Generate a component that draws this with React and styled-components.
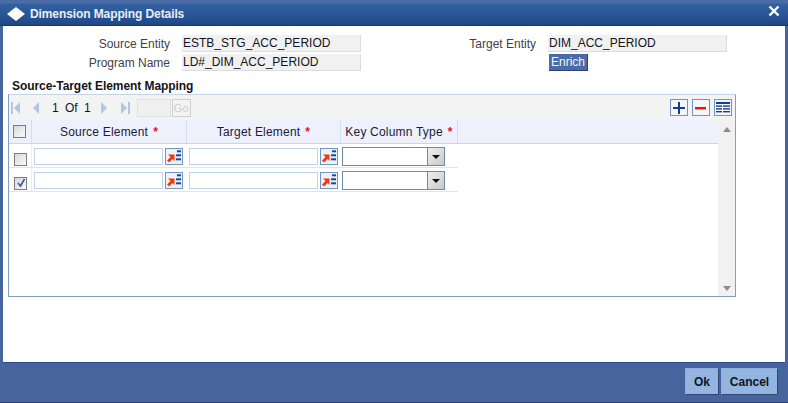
import React from 'react'
import styled, { createGlobalStyle } from 'styled-components'

const GlobalStyle = createGlobalStyle`
  html, body {
    margin: 0;
    padding: 0;
    background: #fff;
  }
  body {
    font-family: "Liberation Sans", Arial, sans-serif;
  }
`

const Dialog = styled.div`
  width: 788px;
  height: 403px;
  box-sizing: border-box;
  display: flex;
  flex-direction: column;
  overflow: hidden;
  background: #46659f;
  padding: 0 3px 3px;
  border-bottom: 1px solid #2a4478;
`

const TitleBar = styled.div`
  height: 26px;
  flex: none;
  display: flex;
  align-items: center;
  margin: 0 -3px;
  padding: 2px 8px 0 7px;
  box-sizing: border-box;
  background: linear-gradient(#4a6ba6 0, #4a6ba6 3px, #33619f 4px, #2a5595 60%, #1f4785 100%);
  border-bottom: 1px solid #16366c;
`

const TitleText = styled.span`
  margin-left: 5px;
  font-size: 12px;
  font-weight: bold;
  letter-spacing: -0.1px;
  color: #e8eef8;
  flex: 1;
`

const CloseIcon = styled.svg`
  margin-bottom: 5px;
`

const Body = styled.div`
  flex: 1;
  background: #fff;
  padding: 9px 0 0 5px;
  display: flex;
  flex-direction: column;
`

const Form = styled.div`
  display: flex;
  height: 42px;
`

const FormColumn = styled.div`
  width: ${props => props.width}px;
  flex: none;
  display: flex;
  flex-direction: column;
  gap: 2px;
`

const FormRow = styled.div`
  display: flex;
  align-items: center;
  height: 17px;
`

const Label = styled.label`
  width: ${props => props.width}px;
  flex: none;
  padding-right: 12px;
  box-sizing: border-box;
  text-align: right;
  font-size: 12px;
  color: #3f3f48;
`

const ReadOnlyValue = styled.div`
  width: 179px;
  height: 17px;
  box-sizing: border-box;
  background: #f1f1f1;
  border-right: 1px solid #dcdcdc;
  border-bottom: 1px solid #dcdcdc;
  padding-left: 1px;
  font-size: 12px;
  line-height: 16px;
  color: #14141c;
  white-space: nowrap;
`

const EnrichButton = styled.button`
  width: 39px;
  height: 17px;
  margin-left: 1px;
  padding: 0;
  border: 0;
  border-bottom: 1px solid #2d4370;
  border-right: 1px solid #2d4370;
  background: #4a6ba6;
  color: #f2f5fb;
  font-family: inherit;
  font-size: 12px;
  line-height: 15px;
`

const SectionTitle = styled.div`
  margin: 2px 0 0 4px;
  height: 15px;
  line-height: 15px;
  font-size: 12px;
  font-weight: bold;
  letter-spacing: -0.06px;
  color: #14141c;
`

const Panel = styled.div`
  width: 728px;
  height: 203px;
  box-sizing: border-box;
  border: 1px solid #7f9fc8;
  border-top-color: #c4d3e8;
  display: flex;
  flex-direction: column;
`

const Toolbar = styled.div`
  height: 25px;
  flex: none;
  display: flex;
  align-items: center;
  padding-left: 2px;
  background: #f3f3f3;
`

const Pager = styled.span`
  font-size: 12px;
  color: #14141c;
  word-spacing: 3px;
  margin: 0 10px 0 0;
`

const PageInput = styled.div`
  width: 32px;
  height: 16px;
  background: #f0f0f0;
  border: 1px solid #e0e0e0;
`

const GoButton = styled.div`
  width: 19px;
  height: 18px;
  margin-left: 1px;
  box-sizing: border-box;
  border: 1px solid #cfcfcf;
  font-size: 11px;
  line-height: 16px;
  text-align: center;
  color: #cfcfcf;
`

const ToolbarActions = styled.div`
  margin-left: auto;
  display: flex;
  gap: 4px;
  padding-right: 3px;
`

const ActionButton = styled.div`
  width: 18px;
  height: 17px;
  box-sizing: border-box;
  border: 1px solid #6f96bf;
  background: #f4f6fa;
  display: flex;
  align-items: center;
  justify-content: center;
`

const TableArea = styled.div`
  flex: 1;
  display: flex;
  min-height: 0;
`

const Table = styled.div`
  flex: 1;
  min-width: 0;
`

const HeaderRow = styled.div`
  height: 24px;
  display: flex;
  background: #eef1fb;
  border-bottom: 1px solid #c9d6ea;
  box-sizing: border-box;
`

const Row = styled.div`
  display: flex;
  width: 449px;
  height: 24px;
  box-sizing: border-box;
  border-bottom: 1px solid #dde5f3;
`

const HeaderCell = styled.div`
  width: ${props => props.width}px;
  flex: none;
  box-sizing: border-box;
  border-right: 1px solid #d3ddee;
  display: flex;
  align-items: center;
  justify-content: center;
  font-size: 12px;
  letter-spacing: 0.2px;
  color: #1a1a3a;
`

const HeaderCheckCell = styled(HeaderCell)`
  padding-right: 1px;
`

const Required = styled.span`
  color: #e4101c;
  font-weight: bold;
  margin-left: 5px;
`

const Cell = styled.div`
  width: ${props => props.width}px;
  flex: none;
  box-sizing: border-box;
  display: flex;
  align-items: center;
  padding: 2px 0 0 ${props => props.$pad || 0}px;
`

const CheckCell = styled(Cell)`
  justify-content: center;
  border-right: 1px solid #e8edf7;
  padding: 7px 0 0 1px;
`

const CheckBox = styled.div`
  width: 11px;
  height: 11px;
  border: 1px solid #7d7d7d;
  background: linear-gradient(135deg, #d8d8d8, #fafafa);
  display: flex;
  align-items: center;
  justify-content: center;
`

const TextInput = styled.div`
  width: 129px;
  height: 17px;
  box-sizing: border-box;
  border: 1px solid #c1d2e9;
  background: #fff;
`

const LovButton = styled.div`
  width: 18px;
  height: 17px;
  margin-left: 2px;
  box-sizing: border-box;
  border: 1px solid #6f96bf;
  background: #eef1f6;
  display: flex;
`

const Select = styled.div`
  width: 103px;
  height: 19px;
  box-sizing: border-box;
  margin-left: 1px;
  border: 1px solid #6d8bab;
  background: #fff;
  display: flex;
  justify-content: flex-end;
`

const SelectArrow = styled.div`
  width: 16px;
  background: linear-gradient(135deg, #f0f0f0, #c8c8c8);
  border-left: 1px solid #6d8bab;
  display: flex;
  align-items: center;
  justify-content: center;
  &::after {
    content: "";
    border-left: 4px solid transparent;
    border-right: 4px solid transparent;
    border-top: 4px solid #111;
  }
`

const Scrollbar = styled.div`
  width: 17px;
  flex: none;
  background: #f1f1f1;
  display: flex;
  flex-direction: column;
  justify-content: space-between;
  align-items: center;
  padding: 7px 0 5px;
  box-sizing: border-box;
`

const Footer = styled.div`
  height: 37px;
  flex: none;
  display: flex;
  align-items: center;
  justify-content: flex-end;
  gap: 2px;
  padding: 1px 7px 0 0;
  box-sizing: border-box;
  border-top: 1px solid #2f4c80;
`

const FooterButton = styled.button`
  width: ${props => props.width}px;
  height: 27px;
  padding: 0;
  border: 1px solid #8fb0dc;
  border-right-color: #2f4670;
  border-bottom-color: #2f4670;
  background: #94b5e0;
  color: #10141c;
  font-family: inherit;
  font-size: 12px;
  font-weight: bold;
`

const PagerIcon = styled.svg`
  display: block;
  margin-right: ${props => props.$gap}px;
`

const First = ({ flip, gap }) => (
  <PagerIcon $gap={gap} width="10" height="12" viewBox="0 0 10 12">
    <g fill="#b4c6e0" transform={flip ? 'matrix(-1 0 0 1 10 0)' : undefined}>
      <rect x="0" y="0" width="2" height="12" />
      <path d="M9 0v12L3 6z" />
    </g>
  </PagerIcon>
)

const Step = ({ flip, gap }) => (
  <PagerIcon $gap={gap} width="7" height="12" viewBox="0 0 7 12">
    <path fill="#b4c6e0" d={flip ? 'M0 0v12l6-6z' : 'M6 0v12L0 6z'} />
  </PagerIcon>
)

const LovIcon = () => (
  <svg width="16" height="15" viewBox="0 0 16 15">
    <path fill="#f03a0c" d="M2 5.500h6.500V12l-2-2-3.500 3.500-2-2L4.500 8z" />
    <g fill="#1b4a90">
      <rect x="11" y="1.300" width="4" height="2" />
      <rect x="10" y="5.300" width="5" height="2" />
      <rect x="10" y="9.300" width="5" height="2" />
    </g>
  </svg>
)

const ScrollArrow = ({ down }) => (
  <svg width="8" height="5" viewBox="0 0 8 5">
    <path fill="#8c8c8c" d={down ? 'M0 0h8L4 5z' : 'M4 0l4 5H0z'} />
  </svg>
)

function MappingRow({ checked }) {
  return (
    <Row>
      <CheckCell width={23}>
        <CheckBox>
          {checked && (
            <svg width="10" height="10" viewBox="0 0 10 10">
              <path d="M2 5l2.500 3L8.500 1" fill="none" stroke="#3a5a9c" strokeWidth="1.6" />
            </svg>
          )}
        </CheckBox>
      </CheckCell>
      <Cell width={155} $pad={2}>
        <TextInput />
        <LovButton><LovIcon /></LovButton>
      </Cell>
      <Cell width={154} $pad={2}>
        <TextInput />
        <LovButton><LovIcon /></LovButton>
      </Cell>
      <Cell width={117}>
        <Select><SelectArrow /></Select>
      </Cell>
    </Row>
  )
}

export default function App() {
  return (
    <Dialog>
      <GlobalStyle />
      <TitleBar>
        <svg width="18" height="14" viewBox="0 0 18 14">
          <path fill="#fff" d="M9 0l9 7-9 7-9-7z" />
        </svg>
        <TitleText>Dimension Mapping Details</TitleText>
        <CloseIcon width="12" height="12" viewBox="0 0 12 12">
          <path d="M1.500 1.500l9 9M10.500 1.500l-9 9" stroke="#fff" strokeWidth="2.400" />
        </CloseIcon>
      </TitleBar>
      <Body>
        <Form>
          <FormColumn width={366}>
            <FormRow>
              <Label width={174}>Source Entity</Label>
              <ReadOnlyValue>ESTB_STG_ACC_PERIOD</ReadOnlyValue>
            </FormRow>
            <FormRow>
              <Label width={174}>Program Name</Label>
              <ReadOnlyValue>LD#_DIM_ACC_PERIOD</ReadOnlyValue>
            </FormRow>
          </FormColumn>
          <FormColumn width={360}>
            <FormRow>
              <Label width={174}>Target Entity</Label>
              <ReadOnlyValue>DIM_ACC_PERIOD</ReadOnlyValue>
            </FormRow>
            <FormRow>
              <Label width={174} />
              <EnrichButton>Enrich</EnrichButton>
            </FormRow>
          </FormColumn>
        </Form>
        <SectionTitle>Source-Target Element Mapping</SectionTitle>
        <Panel>
          <Toolbar>
            <First gap={12} />
            <Step gap={12} />
            <Pager>1 Of 1</Pager>
            <Step flip gap={12} />
            <First flip gap={7} />
            <PageInput />
            <GoButton>Go</GoButton>
            <ToolbarActions>
              <ActionButton>
                <svg width="12" height="12" viewBox="0 0 12 12">
                  <path fill="#0f3c94" d="M5 0h2v5h5v2H7v5H5V7H0V5h5z" />
                </svg>
              </ActionButton>
              <ActionButton>
                <svg width="12" height="4" viewBox="0 0 12 4">
                  <rect y="1" width="11" height="2.400" fill="#ee1111" />
                </svg>
              </ActionButton>
              <ActionButton>
                <svg width="14" height="12" viewBox="0 0 14 12">
                  <g fill="#15408f">
                    <rect width="14" height="2" />
                    <rect y="3.400" width="6" height="1.400" />
                    <rect x="7" y="3.400" width="7" height="1.400" />
                    <rect y="6.200" width="6" height="1.400" />
                    <rect x="7" y="6.200" width="7" height="1.400" />
                    <rect y="9" width="6" height="1.400" />
                    <rect x="7" y="9" width="7" height="1.400" />
                  </g>
                </svg>
              </ActionButton>
            </ToolbarActions>
          </Toolbar>
          <TableArea>
            <Table>
              <HeaderRow>
                <HeaderCheckCell width={23}><CheckBox /></HeaderCheckCell>
                <HeaderCell width={155}>Source Element<Required>*</Required></HeaderCell>
                <HeaderCell width={154}>Target Element<Required>*</Required></HeaderCell>
                <HeaderCell width={117}>Key Column Type<Required>*</Required></HeaderCell>
              </HeaderRow>
              <MappingRow />
              <MappingRow checked />
            </Table>
            <Scrollbar>
              <ScrollArrow />
              <ScrollArrow down />
            </Scrollbar>
          </TableArea>
        </Panel>
      </Body>
      <Footer>
        <FooterButton width={34}>Ok</FooterButton>
        <FooterButton width={57}>Cancel</FooterButton>
      </Footer>
    </Dialog>
  )
}
